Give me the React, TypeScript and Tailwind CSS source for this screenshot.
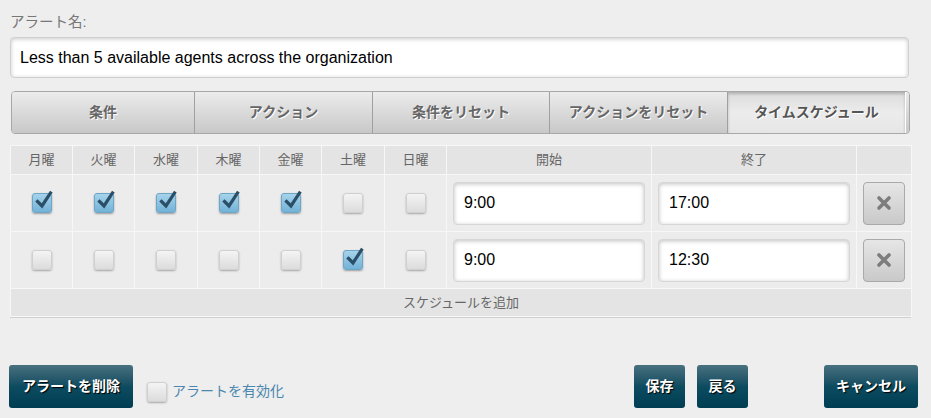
import React from "react";

const font = { fontFamily: '"Liberation Sans", "Noto Sans CJK JP", sans-serif' };

function Check({ checked }: { checked: boolean }) {
  if (checked) {
    return (
      <div className="relative mx-auto h-[20px] w-[20px] rounded-[3px] border border-[#6fa6c6] bg-gradient-to-b from-[#a6d3ec] to-[#72b2d7] shadow-[0_1px_2px_rgba(0,0,0,0.35)]">
        <svg viewBox="0 0 20 20" className="absolute left-[1px] top-[-4px] h-[20px] w-[20px]">
          <path d="M3.5 11.5 L8 16 L16.5 3" fill="none" stroke="#2b4f66" strokeWidth="3.2" strokeLinecap="square" />
        </svg>
      </div>
    );
  }
  return (
    <div className="mx-auto h-[20px] w-[20px] rounded-[3px] border border-[#d0d0d0] bg-gradient-to-b from-[#f4f4f4] to-[#dcdcdc] shadow-[0_1px_2px_rgba(0,0,0,0.3)]" />
  );
}

function TimeInput({ value }: { value: string }) {
  return (
    <div className="flex h-[43px] items-center rounded-[4px] border border-[#d6d6d6] bg-white pl-[10px] text-[16px] text-black shadow-[inset_0_1px_4px_rgba(0,0,0,0.25)]">
      {value}
    </div>
  );
}

function XButton() {
  return (
    <div className="mx-auto flex h-[43px] w-[42px] items-center justify-center rounded-[4px] border border-[#a9a9a9] bg-gradient-to-b from-[#e6e6e6] to-[#c9c9c9]">
      <svg viewBox="0 0 16 16" className="h-[16px] w-[16px]">
        <path d="M3 3 L13 13 M13 3 L3 13" stroke="#7d7d7d" strokeWidth="3.6" strokeLinecap="round" />
      </svg>
    </div>
  );
}

function DarkButton({ children, className = "" }: { children: React.ReactNode; className?: string }) {
  return (
    <div
      className={`flex h-[43px] items-center justify-center rounded-[3px] bg-gradient-to-b from-[#48717f] via-[#0d4b60] to-[#003d52] text-[14px] font-bold text-white [text-shadow:1px_1px_1px_#000] ${className}`}
    >
      {children}
    </div>
  );
}

const days = ["月曜", "火曜", "水曜", "木曜", "金曜", "土曜", "日曜"];
const widths = [62, 62, 63, 62, 62, 63, 62];
const rows = [
  { checks: [true, true, true, true, true, false, false], start: "9:00", end: "17:00" },
  { checks: [false, false, false, false, false, true, false], start: "9:00", end: "12:30" },
];

const tabs = [
  { label: "条件", w: 182 },
  { label: "アクション", w: 178 },
  { label: "条件をリセット", w: 177 },
  { label: "アクションをリセット", w: 178 },
];

export default function App() {
  return (
    <div className="h-[418px] w-[931px] overflow-hidden bg-[#eeeeee]" style={font}>
      <div className="pl-[10px] pr-[22px] pt-[13px]">
        <div className="text-[14.5px] leading-[18px] text-[#777]">アラート名:</div>
        <div className="mt-[6px] flex h-[41px] items-center rounded-[4px] border border-[#d0d0d0] bg-white pl-[9px] text-[16px] text-black shadow-[inset_0_1px_4px_rgba(0,0,0,0.22)]">
          Less than 5 available agents across the organization
        </div>

        {/* tabs */}
        <div className="ml-[1px] mt-[13px] flex h-[43px] w-[899px] overflow-hidden rounded-[4px] border border-[#a8a8a8]">
          {tabs.map((t, i) => (
            <div
              key={t.label}
              style={{ width: t.w }}
              className={`flex items-center justify-center bg-gradient-to-b from-[#ececec] to-[#c8c8c8] text-[14px] font-bold text-[#666] [text-shadow:1px_1px_0_#fff] ${i > 0 ? "border-l border-[#a0a0a0]" : ""}`}
            >
              {t.label}
            </div>
          ))}
          <div className="flex w-[178px] items-center justify-center border-l border-[#a0a0a0] bg-gradient-to-b from-[#dcdcdc] via-[#ececec] to-[#e6e6e6] text-[14px] font-bold text-[#555] shadow-[inset_0_2px_3px_rgba(0,0,0,0.2)] [text-shadow:1px_1px_0_#fff]">
            タイムスケジュール
          </div>
          <div className="flex-1 border-l border-white bg-gradient-to-b from-[#e8e8e8] to-[#c8c8c8]" />
        </div>

        {/* table */}
        <div className="mt-[11px] w-[901px] border-b border-[#cfcfcf]">
          <table className="w-[901px] table-fixed border-collapse text-[13px]">
            <colgroup>
              {widths.map((w, i) => (
                <col key={i} style={{ width: w }} />
              ))}
              <col style={{ width: 205 }} />
              <col style={{ width: 205 }} />
              <col style={{ width: 55 }} />
            </colgroup>
            <thead>
              <tr className="h-[29px] bg-[#e4e4e4] text-[#666]">
                {days.map((d) => (
                  <th key={d} className="border border-[#f7f7f7] font-normal">
                    {d}
                  </th>
                ))}
                <th className="border border-[#f7f7f7] font-normal">開始</th>
                <th className="border border-[#f7f7f7] font-normal">終了</th>
                <th className="border border-[#f7f7f7] font-normal"></th>
              </tr>
            </thead>
            <tbody>
              {rows.map((r, ri) => (
                <tr key={ri} className="h-[57px] bg-[#ececec]">
                  {r.checks.map((c, ci) => (
                    <td key={ci} className="border border-[#f7f7f7] p-0">
                      <Check checked={c} />
                    </td>
                  ))}
                  <td className="border border-[#f7f7f7] px-[6px]">
                    <TimeInput value={r.start} />
                  </td>
                  <td className="border border-[#f7f7f7] px-[6px]">
                    <TimeInput value={r.end} />
                  </td>
                  <td className="border border-[#f7f7f7] p-0">
                    <XButton />
                  </td>
                </tr>
              ))}
              <tr className="h-[28px] bg-[#e4e4e4]">
                <td colSpan={10} className="border border-[#f7f7f7] text-center text-[13px] text-[#666]">
                  スケジュールを追加
                </td>
              </tr>
            </tbody>
          </table>
        </div>
      </div>

      {/* bottom bar */}
      <div className="mt-[47px] flex items-center pl-[9px] pr-[13px]">
        <DarkButton className="w-[124px]">アラートを削除</DarkButton>
        <div className="ml-[14px] mt-[10px] flex items-center">
          <div className="h-[20px] w-[20px] rounded-[3px] border border-[#d0d0d0] bg-gradient-to-b from-[#f4f4f4] to-[#dcdcdc] shadow-[0_1px_2px_rgba(0,0,0,0.3)]" />
          <span className="ml-[5px] text-[14px] text-[#4a86ad]">アラートを有効化</span>
        </div>
        <div className="flex-1" />
        <DarkButton className="w-[51px]">保存</DarkButton>
        <DarkButton className="ml-[12px] w-[51px]">戻る</DarkButton>
        <DarkButton className="ml-[76px] w-[94px]">キャンセル</DarkButton>
      </div>
    </div>
  );
}
